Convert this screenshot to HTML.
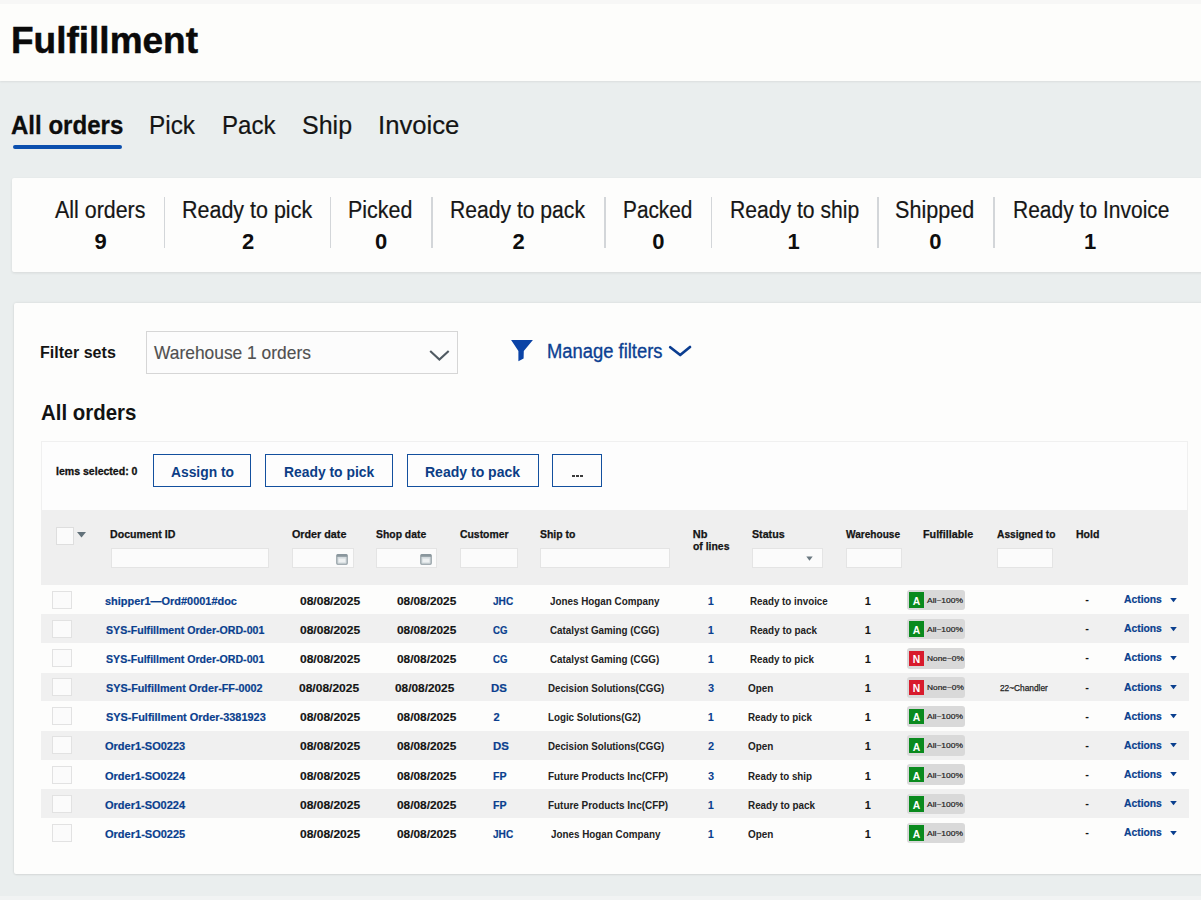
<!DOCTYPE html>
<html><head><meta charset="utf-8"><style>
html,body{margin:0;padding:0;}
body{width:1201px;height:900px;overflow:hidden;position:relative;background:#eaeeee;font-family:"Liberation Sans",sans-serif;}
.b{position:absolute;}
.t{position:absolute;white-space:nowrap;line-height:1;transform-origin:0 0;}
</style></head><body>
<div class="b" style="left:0px;top:0px;width:1201.00px;height:81.00px;background:#fdfdfb;box-shadow:0 1px 2px rgba(0,0,0,0.07);"></div>
<div class="b" style="left:0px;top:0px;width:1201.00px;height:4.00px;background:#f7f7f6;"></div>
<div class="b" style="left:0px;top:896px;width:1201.00px;height:4.00px;background:#f1f3f3;"></div>
<div class="b" style="left:12.5px;top:145px;width:109.70px;height:4.20px;background:#0b4fae;border-radius:2px;"></div>
<div class="b" style="left:11.7px;top:177.8px;width:1203.30px;height:94.60px;background:#fdfdfc;border-radius:2px;box-shadow:0 1px 3px rgba(0,0,0,0.09);"></div>
<div class="b" style="left:163.85px;top:196.5px;width:1.50px;height:51.50px;background:#d3d6d9;"></div>
<div class="b" style="left:329.65px;top:196.5px;width:1.50px;height:51.50px;background:#d3d6d9;"></div>
<div class="b" style="left:431.25px;top:196.5px;width:1.50px;height:51.50px;background:#d3d6d9;"></div>
<div class="b" style="left:604.25px;top:196.5px;width:1.50px;height:51.50px;background:#d3d6d9;"></div>
<div class="b" style="left:710.95px;top:196.5px;width:1.50px;height:51.50px;background:#d3d6d9;"></div>
<div class="b" style="left:877.25px;top:196.5px;width:1.50px;height:51.50px;background:#d3d6d9;"></div>
<div class="b" style="left:993.25px;top:196.5px;width:1.50px;height:51.50px;background:#d3d6d9;"></div>
<div class="b" style="left:13.5px;top:303.3px;width:1201.50px;height:571.00px;background:#fdfdfc;border-radius:2px;box-shadow:0 0 3px rgba(0,0,0,0.10), 0 1px 2px rgba(0,0,0,0.05);"></div>
<div class="b" style="left:145.7px;top:331.4px;width:312.30px;height:42.20px;background:#fcfcfc;border:1px solid #d6d6d6;box-sizing:border-box;"></div>
<div class="b" style="left:40.5px;top:441.2px;width:1147.80px;height:68.80px;background:#fdfdfd;border:1px solid #f0f0f0;border-bottom:none;box-sizing:border-box;"></div>
<div class="b" style="left:152.6px;top:454.4px;width:98.40px;height:32.60px;border:1.9px solid #13509e;box-sizing:border-box;background:#fdfdfd;"></div>
<div class="b" style="left:265px;top:454.4px;width:127.80px;height:32.60px;border:1.9px solid #13509e;box-sizing:border-box;background:#fdfdfd;"></div>
<div class="b" style="left:407px;top:454.4px;width:131.80px;height:32.60px;border:1.9px solid #13509e;box-sizing:border-box;background:#fdfdfd;"></div>
<div class="b" style="left:552px;top:454.4px;width:49.80px;height:32.60px;border:1.9px solid #13509e;box-sizing:border-box;background:#fdfdfd;"></div>
<div class="b" style="left:572.0px;top:475.0px;width:3.00px;height:2.20px;background:#3c3c3c;"></div>
<div class="b" style="left:575.9px;top:475.0px;width:3.00px;height:2.20px;background:#3c3c3c;"></div>
<div class="b" style="left:579.8px;top:475.0px;width:3.00px;height:2.20px;background:#3c3c3c;"></div>
<div class="b" style="left:40.7px;top:510px;width:1147.60px;height:75.10px;background:#efefef;"></div>
<div class="b" style="left:56.2px;top:526.9px;width:18.00px;height:18.50px;background:#fbfbfb;border:1.5px solid #dedede;box-sizing:border-box;"></div>
<div class="b" style="left:110.9px;top:548.2px;width:158.60px;height:19.80px;background:#fbfbfb;border:1px solid #e4e4e4;box-sizing:border-box;"></div>
<div class="b" style="left:292.3px;top:548.2px;width:61.40px;height:19.80px;background:#fbfbfb;border:1px solid #e4e4e4;box-sizing:border-box;"></div>
<div class="b" style="left:376.3px;top:548.2px;width:60.70px;height:19.80px;background:#fbfbfb;border:1px solid #e4e4e4;box-sizing:border-box;"></div>
<div class="b" style="left:460px;top:548.2px;width:57.50px;height:19.80px;background:#fbfbfb;border:1px solid #e4e4e4;box-sizing:border-box;"></div>
<div class="b" style="left:540px;top:548.2px;width:130.00px;height:19.80px;background:#fbfbfb;border:1px solid #e4e4e4;box-sizing:border-box;"></div>
<div class="b" style="left:751.7px;top:548.2px;width:71.60px;height:19.80px;background:#fbfbfb;border:1px solid #e4e4e4;box-sizing:border-box;"></div>
<div class="b" style="left:846px;top:548.2px;width:55.70px;height:19.80px;background:#fbfbfb;border:1px solid #e4e4e4;box-sizing:border-box;"></div>
<div class="b" style="left:996.5px;top:548.2px;width:56.90px;height:19.80px;background:#fbfbfb;border:1px solid #e4e4e4;box-sizing:border-box;"></div>
<div class="b" style="left:52.2px;top:590.8px;width:19.50px;height:18.00px;background:#fbfbfb;border:1.5px solid #e2e2e2;box-sizing:border-box;"></div>
<div class="b" style="left:906.7px;top:589.7px;width:58.60px;height:20.60px;background:#d9d9d9;border-radius:3px;"></div>
<div class="b" style="left:908.7px;top:592.3px;width:15.60px;height:15.40px;background:#0a8a1e;"></div>
<div class="b" style="left:40.7px;top:614.42px;width:1148.00px;height:28.62px;background:#f0f0f0;"></div>
<div class="b" style="left:52.2px;top:619.92px;width:19.50px;height:18.00px;background:#fbfbfb;border:1.5px solid #e2e2e2;box-sizing:border-box;"></div>
<div class="b" style="left:906.7px;top:618.82px;width:58.60px;height:20.60px;background:#d9d9d9;border-radius:3px;"></div>
<div class="b" style="left:908.7px;top:621.42px;width:15.60px;height:15.40px;background:#0a8a1e;"></div>
<div class="b" style="left:52.2px;top:649.04px;width:19.50px;height:18.00px;background:#fbfbfb;border:1.5px solid #e2e2e2;box-sizing:border-box;"></div>
<div class="b" style="left:906.7px;top:647.94px;width:58.60px;height:20.60px;background:#d9d9d9;border-radius:3px;"></div>
<div class="b" style="left:908.7px;top:650.54px;width:15.60px;height:15.40px;background:#d81b2c;"></div>
<div class="b" style="left:40.7px;top:672.66px;width:1148.00px;height:28.62px;background:#f0f0f0;"></div>
<div class="b" style="left:52.2px;top:678.16px;width:19.50px;height:18.00px;background:#fbfbfb;border:1.5px solid #e2e2e2;box-sizing:border-box;"></div>
<div class="b" style="left:906.7px;top:677.06px;width:58.60px;height:20.60px;background:#d9d9d9;border-radius:3px;"></div>
<div class="b" style="left:908.7px;top:679.66px;width:15.60px;height:15.40px;background:#d81b2c;"></div>
<div class="b" style="left:52.2px;top:707.28px;width:19.50px;height:18.00px;background:#fbfbfb;border:1.5px solid #e2e2e2;box-sizing:border-box;"></div>
<div class="b" style="left:906.7px;top:706.18px;width:58.60px;height:20.60px;background:#d9d9d9;border-radius:3px;"></div>
<div class="b" style="left:908.7px;top:708.78px;width:15.60px;height:15.40px;background:#0a8a1e;"></div>
<div class="b" style="left:40.7px;top:730.9px;width:1148.00px;height:28.62px;background:#f0f0f0;"></div>
<div class="b" style="left:52.2px;top:736.4px;width:19.50px;height:18.00px;background:#fbfbfb;border:1.5px solid #e2e2e2;box-sizing:border-box;"></div>
<div class="b" style="left:906.7px;top:735.3px;width:58.60px;height:20.60px;background:#d9d9d9;border-radius:3px;"></div>
<div class="b" style="left:908.7px;top:737.9px;width:15.60px;height:15.40px;background:#0a8a1e;"></div>
<div class="b" style="left:52.2px;top:765.52px;width:19.50px;height:18.00px;background:#fbfbfb;border:1.5px solid #e2e2e2;box-sizing:border-box;"></div>
<div class="b" style="left:906.7px;top:764.42px;width:58.60px;height:20.60px;background:#d9d9d9;border-radius:3px;"></div>
<div class="b" style="left:908.7px;top:767.02px;width:15.60px;height:15.40px;background:#0a8a1e;"></div>
<div class="b" style="left:40.7px;top:789.14px;width:1148.00px;height:28.62px;background:#f0f0f0;"></div>
<div class="b" style="left:52.2px;top:794.64px;width:19.50px;height:18.00px;background:#fbfbfb;border:1.5px solid #e2e2e2;box-sizing:border-box;"></div>
<div class="b" style="left:906.7px;top:793.54px;width:58.60px;height:20.60px;background:#d9d9d9;border-radius:3px;"></div>
<div class="b" style="left:908.7px;top:796.14px;width:15.60px;height:15.40px;background:#0a8a1e;"></div>
<div class="b" style="left:52.2px;top:823.76px;width:19.50px;height:18.00px;background:#fbfbfb;border:1.5px solid #e2e2e2;box-sizing:border-box;"></div>
<div class="b" style="left:906.7px;top:822.66px;width:58.60px;height:20.60px;background:#d9d9d9;border-radius:3px;"></div>
<div class="b" style="left:908.7px;top:825.26px;width:15.60px;height:15.40px;background:#0a8a1e;"></div>
<svg class="b" style="left:428px;top:346px" width="24" height="18" viewBox="0 0 24 18"><polyline points="2.2,4.9 11.4,13.6 20.7,4.9" fill="none" stroke="#505a62" stroke-width="2.1"/></svg>
<svg class="b" style="left:508px;top:337px" width="28" height="28" viewBox="0 0 28 28"><path d="M3.1,2.9 L24.9,2.9 L15.8,13.9 L15.6,21.4 L10.4,24.2 L10.4,13.9 Z" fill="#0b43a6"/></svg>
<svg class="b" style="left:667px;top:342px" width="27" height="18" viewBox="0 0 27 18"><polyline points="3.2,5.3 13.2,13.0 23.0,5.0" fill="none" stroke="#0b3d90" stroke-width="2.7" stroke-linecap="round" stroke-linejoin="round"/></svg>
<svg class="b" style="left:76px;top:531px" width="11" height="8" viewBox="0 0 11 8"><path d="M1,1 L10,1 L5.5,6.5 Z" fill="#62717a"/></svg>
<svg class="b" style="left:803.5px;top:554.5px" width="11" height="8" viewBox="0 0 11 8"><path d="M2.3,1.5 L8.7,1.5 L5.5,5.8 Z" fill="#6a7880"/></svg>
<svg class="b" style="left:336.3px;top:552.5px" width="12" height="12" viewBox="0 0 12 12"><rect x="0.8" y="1.6" width="10.4" height="9.6" rx="1" fill="#d5dcdf" stroke="#8a979d" stroke-width="1.1"/><rect x="0.8" y="1.6" width="10.4" height="2.2" fill="#8a979d"/><rect x="2.6" y="5.6" width="6.8" height="3.8" fill="#eef1f2"/></svg>
<svg class="b" style="left:419.7px;top:552.5px" width="12" height="12" viewBox="0 0 12 12"><rect x="0.8" y="1.6" width="10.4" height="9.6" rx="1" fill="#d5dcdf" stroke="#8a979d" stroke-width="1.1"/><rect x="0.8" y="1.6" width="10.4" height="2.2" fill="#8a979d"/><rect x="2.6" y="5.6" width="6.8" height="3.8" fill="#eef1f2"/></svg>
<svg class="b" style="left:1168.5px;top:596.60px" width="9" height="7" viewBox="0 0 9 7"><path d="M1.2,1 L7.8,1 L4.5,5.3 Z" fill="#0a3f8e"/></svg>
<svg class="b" style="left:1168.5px;top:625.72px" width="9" height="7" viewBox="0 0 9 7"><path d="M1.2,1 L7.8,1 L4.5,5.3 Z" fill="#0a3f8e"/></svg>
<svg class="b" style="left:1168.5px;top:654.84px" width="9" height="7" viewBox="0 0 9 7"><path d="M1.2,1 L7.8,1 L4.5,5.3 Z" fill="#0a3f8e"/></svg>
<svg class="b" style="left:1168.5px;top:683.96px" width="9" height="7" viewBox="0 0 9 7"><path d="M1.2,1 L7.8,1 L4.5,5.3 Z" fill="#0a3f8e"/></svg>
<svg class="b" style="left:1168.5px;top:713.08px" width="9" height="7" viewBox="0 0 9 7"><path d="M1.2,1 L7.8,1 L4.5,5.3 Z" fill="#0a3f8e"/></svg>
<svg class="b" style="left:1168.5px;top:742.20px" width="9" height="7" viewBox="0 0 9 7"><path d="M1.2,1 L7.8,1 L4.5,5.3 Z" fill="#0a3f8e"/></svg>
<svg class="b" style="left:1168.5px;top:771.32px" width="9" height="7" viewBox="0 0 9 7"><path d="M1.2,1 L7.8,1 L4.5,5.3 Z" fill="#0a3f8e"/></svg>
<svg class="b" style="left:1168.5px;top:800.44px" width="9" height="7" viewBox="0 0 9 7"><path d="M1.2,1 L7.8,1 L4.5,5.3 Z" fill="#0a3f8e"/></svg>
<svg class="b" style="left:1168.5px;top:829.56px" width="9" height="7" viewBox="0 0 9 7"><path d="M1.2,1 L7.8,1 L4.5,5.3 Z" fill="#0a3f8e"/></svg>
<div class="t" style="top:22.24px;font-size:37.4px;font-weight:bold;color:#0a0a0a;-webkit-text-stroke:0.5px #0a0a0a;left:10.53px;transform:scaleX(0.9895);">Fulfillment</div>
<div class="t" style="top:111.77px;font-size:26.5px;font-weight:bold;color:#0d0d0d;-webkit-text-stroke:0.3px #0d0d0d;left:10.82px;transform:scaleX(0.9076);">All orders</div>
<div class="t" style="top:111.77px;font-size:26.5px;font-weight:normal;color:#151515;-webkit-text-stroke:0.2px #151515;left:149.33px;transform:scaleX(0.9194);">Pick</div>
<div class="t" style="top:111.77px;font-size:26.5px;font-weight:normal;color:#151515;-webkit-text-stroke:0.2px #151515;left:221.76px;transform:scaleX(0.9075);">Pack</div>
<div class="t" style="top:111.77px;font-size:26.5px;font-weight:normal;color:#151515;-webkit-text-stroke:0.2px #151515;left:302.12px;transform:scaleX(0.9438);">Ship</div>
<div class="t" style="top:111.77px;font-size:26.5px;font-weight:normal;color:#151515;-webkit-text-stroke:0.2px #151515;left:377.58px;transform:scaleX(0.9695);">Invoice</div>
<div class="t" style="top:199.23px;font-size:23.0px;font-weight:normal;color:#161616;-webkit-text-stroke:0.2px #161616;left:55.20px;transform:scaleX(0.9309);">All orders</div>
<div class="t" style="top:230.78px;font-size:22.0px;font-weight:bold;color:#0e0e0e;left:94.47px;">9</div>
<div class="t" style="top:199.23px;font-size:23.0px;font-weight:normal;color:#161616;-webkit-text-stroke:0.2px #161616;left:181.67px;transform:scaleX(0.9338);">Ready to pick</div>
<div class="t" style="top:230.78px;font-size:22.0px;font-weight:bold;color:#0e0e0e;left:241.97px;">2</div>
<div class="t" style="top:199.23px;font-size:23.0px;font-weight:normal;color:#161616;-webkit-text-stroke:0.2px #161616;left:348.07px;transform:scaleX(0.9323);">Picked</div>
<div class="t" style="top:230.78px;font-size:22.0px;font-weight:bold;color:#0e0e0e;left:374.95px;">0</div>
<div class="t" style="top:199.23px;font-size:23.0px;font-weight:normal;color:#161616;-webkit-text-stroke:0.2px #161616;left:449.89px;transform:scaleX(0.9177);">Ready to pack</div>
<div class="t" style="top:230.78px;font-size:22.0px;font-weight:bold;color:#0e0e0e;left:512.62px;">2</div>
<div class="t" style="top:199.23px;font-size:23.0px;font-weight:normal;color:#161616;-webkit-text-stroke:0.2px #161616;left:622.72px;transform:scaleX(0.9048);">Packed</div>
<div class="t" style="top:230.78px;font-size:22.0px;font-weight:bold;color:#0e0e0e;left:652.15px;">0</div>
<div class="t" style="top:199.23px;font-size:23.0px;font-weight:normal;color:#161616;-webkit-text-stroke:0.2px #161616;left:729.59px;transform:scaleX(0.9188);">Ready to ship</div>
<div class="t" style="top:230.78px;font-size:22.0px;font-weight:bold;color:#0e0e0e;left:787.40px;">1</div>
<div class="t" style="top:199.23px;font-size:23.0px;font-weight:normal;color:#161616;-webkit-text-stroke:0.2px #161616;left:895.36px;transform:scaleX(0.9378);">Shipped</div>
<div class="t" style="top:230.78px;font-size:22.0px;font-weight:bold;color:#0e0e0e;left:929.35px;">0</div>
<div class="t" style="top:199.23px;font-size:23.0px;font-weight:normal;color:#161616;-webkit-text-stroke:0.2px #161616;left:1012.70px;transform:scaleX(0.9134);">Ready to Invoice</div>
<div class="t" style="top:230.78px;font-size:22.0px;font-weight:bold;color:#0e0e0e;left:1084.05px;">1</div>
<div class="t" style="top:343.64px;font-size:17.2px;font-weight:bold;color:#141414;left:39.83px;transform:scaleX(0.9338);">Filter sets</div>
<div class="t" style="top:343.12px;font-size:19.0px;font-weight:normal;color:#505050;-webkit-text-stroke:0.15px #505050;left:153.77px;transform:scaleX(0.9150);">Warehouse 1 orders</div>
<div class="t" style="top:340.67px;font-size:20.0px;font-weight:normal;color:#0c3f92;-webkit-text-stroke:0.35px #0c3f92;left:546.62px;transform:scaleX(0.9190);">Manage filters</div>
<div class="t" style="top:401.75px;font-size:22.5px;font-weight:bold;color:#121212;left:40.55px;transform:scaleX(0.9082);">All orders</div>
<div class="t" style="top:466.09px;font-size:11px;font-weight:bold;color:#111;-webkit-text-stroke:0.3px #111;left:55.68px;transform:scaleX(0.9588);">Iems selected: 0</div>
<div class="t" style="top:464.73px;font-size:14.5px;font-weight:bold;color:#0c3d86;left:170.52px;transform:scaleX(0.9538);">Assign to</div>
<div class="t" style="top:464.73px;font-size:14.5px;font-weight:bold;color:#0c3d86;left:283.84px;transform:scaleX(0.9566);">Ready to pick</div>
<div class="t" style="top:464.73px;font-size:14.5px;font-weight:bold;color:#0c3d86;left:425.03px;transform:scaleX(0.9666);">Ready to pack</div>
<div class="t" style="top:529.29px;font-size:11.0px;font-weight:bold;color:#141414;-webkit-text-stroke:0.25px #141414;left:110.48px;transform:scaleX(0.9639);">Document ID</div>
<div class="t" style="top:529.29px;font-size:11.0px;font-weight:bold;color:#141414;-webkit-text-stroke:0.25px #141414;left:292.41px;transform:scaleX(0.9772);">Order date</div>
<div class="t" style="top:529.29px;font-size:11.0px;font-weight:bold;color:#141414;-webkit-text-stroke:0.25px #141414;left:376.46px;transform:scaleX(0.9448);">Shop date</div>
<div class="t" style="top:529.29px;font-size:11.0px;font-weight:bold;color:#141414;-webkit-text-stroke:0.25px #141414;left:459.83px;transform:scaleX(0.9458);">Customer</div>
<div class="t" style="top:529.29px;font-size:11.0px;font-weight:bold;color:#141414;-webkit-text-stroke:0.25px #141414;left:540.06px;transform:scaleX(0.9507);">Ship to</div>
<div class="t" style="top:529.29px;font-size:11.0px;font-weight:bold;color:#141414;-webkit-text-stroke:0.25px #141414;left:692.75px;">Nb</div>
<div class="t" style="top:529.29px;font-size:11.0px;font-weight:bold;color:#141414;-webkit-text-stroke:0.25px #141414;left:751.76px;transform:scaleX(0.9697);">Status</div>
<div class="t" style="top:529.29px;font-size:11.0px;font-weight:bold;color:#141414;-webkit-text-stroke:0.25px #141414;left:846.30px;transform:scaleX(0.9179);">Warehouse</div>
<div class="t" style="top:529.29px;font-size:11.0px;font-weight:bold;color:#141414;-webkit-text-stroke:0.25px #141414;left:923.37px;transform:scaleX(0.9771);">Fulfillable</div>
<div class="t" style="top:529.29px;font-size:11.0px;font-weight:bold;color:#141414;-webkit-text-stroke:0.25px #141414;left:996.57px;transform:scaleX(0.9285);">Assigned to</div>
<div class="t" style="top:529.29px;font-size:11.0px;font-weight:bold;color:#141414;-webkit-text-stroke:0.25px #141414;left:1076.28px;transform:scaleX(0.9565);">Hold</div>
<div class="t" style="top:540.99px;font-size:11.0px;font-weight:bold;color:#141414;-webkit-text-stroke:0.25px #141414;left:693.03px;transform:scaleX(0.9467);">of lines</div>
<div class="t" style="top:595.79px;font-size:11.0px;font-weight:bold;color:#0a3f8e;-webkit-text-stroke:0.2px #0a3f8e;left:105.30px;transform:scaleX(0.9943);">shipper1—Ord#0001#doc</div>
<div class="t" style="top:595.79px;font-size:11.0px;font-weight:bold;color:#141414;-webkit-text-stroke:0.15px #141414;left:300.35px;transform:scaleX(1.0931);">08/08/2025</div>
<div class="t" style="top:595.79px;font-size:11.0px;font-weight:bold;color:#141414;-webkit-text-stroke:0.15px #141414;left:396.86px;transform:scaleX(1.0765);">08/08/2025</div>
<div class="t" style="top:595.79px;font-size:11.0px;font-weight:bold;color:#0a3f8e;-webkit-text-stroke:0.2px #0a3f8e;left:493.47px;transform:scaleX(0.9163);">JHC</div>
<div class="t" style="top:595.79px;font-size:11.0px;font-weight:bold;color:#222;left:550.28px;transform:scaleX(0.8951);">Jones Hogan Company</div>
<div class="t" style="top:595.79px;font-size:11.0px;font-weight:bold;color:#0a3f8e;left:707.75px;">1</div>
<div class="t" style="top:595.79px;font-size:11.0px;font-weight:bold;color:#222;left:750.13px;transform:scaleX(0.8893);">Ready to invoice</div>
<div class="t" style="top:595.79px;font-size:11.0px;font-weight:bold;color:#141414;left:864.75px;">1</div>
<div class="t" style="top:594.19px;font-size:11.0px;font-weight:bold;color:#141414;left:1085.33px;">-</div>
<div class="t" style="top:594.19px;font-size:11.0px;font-weight:bold;color:#0a3f8e;-webkit-text-stroke:0.2px #0a3f8e;left:1123.77px;transform:scaleX(0.9384);">Actions</div>
<div class="t" style="top:596.83px;font-size:8.0px;font-weight:normal;color:#222;-webkit-text-stroke:0.2px #222;left:927.30px;transform:scaleX(1.0578);">All~100%</div>
<div class="t" style="top:596.98px;font-size:10.3px;font-weight:bold;color:#fff;left:912.75px;">A</div>
<div class="t" style="top:624.91px;font-size:11.0px;font-weight:bold;color:#0a3f8e;-webkit-text-stroke:0.2px #0a3f8e;left:105.56px;transform:scaleX(0.9628);">SYS-Fulfillment Order-ORD-001</div>
<div class="t" style="top:624.91px;font-size:11.0px;font-weight:bold;color:#141414;-webkit-text-stroke:0.15px #141414;left:300.35px;transform:scaleX(1.0931);">08/08/2025</div>
<div class="t" style="top:624.91px;font-size:11.0px;font-weight:bold;color:#141414;-webkit-text-stroke:0.15px #141414;left:396.86px;transform:scaleX(1.0765);">08/08/2025</div>
<div class="t" style="top:624.91px;font-size:11.0px;font-weight:bold;color:#0a3f8e;-webkit-text-stroke:0.2px #0a3f8e;left:493.26px;transform:scaleX(0.8721);">CG</div>
<div class="t" style="top:624.91px;font-size:11.0px;font-weight:bold;color:#222;left:550.05px;transform:scaleX(0.8932);">Catalyst Gaming (CGG)</div>
<div class="t" style="top:624.91px;font-size:11.0px;font-weight:bold;color:#0a3f8e;left:707.75px;">1</div>
<div class="t" style="top:624.91px;font-size:11.0px;font-weight:bold;color:#222;left:750.13px;transform:scaleX(0.8976);">Ready to pack</div>
<div class="t" style="top:624.91px;font-size:11.0px;font-weight:bold;color:#141414;left:864.75px;">1</div>
<div class="t" style="top:623.31px;font-size:11.0px;font-weight:bold;color:#141414;left:1085.33px;">-</div>
<div class="t" style="top:623.31px;font-size:11.0px;font-weight:bold;color:#0a3f8e;-webkit-text-stroke:0.2px #0a3f8e;left:1123.77px;transform:scaleX(0.9384);">Actions</div>
<div class="t" style="top:625.95px;font-size:8.0px;font-weight:normal;color:#222;-webkit-text-stroke:0.2px #222;left:927.30px;transform:scaleX(1.0578);">All~100%</div>
<div class="t" style="top:626.10px;font-size:10.3px;font-weight:bold;color:#fff;left:912.75px;">A</div>
<div class="t" style="top:654.03px;font-size:11.0px;font-weight:bold;color:#0a3f8e;-webkit-text-stroke:0.2px #0a3f8e;left:105.56px;transform:scaleX(0.9628);">SYS-Fulfillment Order-ORD-001</div>
<div class="t" style="top:654.03px;font-size:11.0px;font-weight:bold;color:#141414;-webkit-text-stroke:0.15px #141414;left:300.35px;transform:scaleX(1.0931);">08/08/2025</div>
<div class="t" style="top:654.03px;font-size:11.0px;font-weight:bold;color:#141414;-webkit-text-stroke:0.15px #141414;left:396.86px;transform:scaleX(1.0765);">08/08/2025</div>
<div class="t" style="top:654.03px;font-size:11.0px;font-weight:bold;color:#0a3f8e;-webkit-text-stroke:0.2px #0a3f8e;left:493.26px;transform:scaleX(0.8721);">CG</div>
<div class="t" style="top:654.03px;font-size:11.0px;font-weight:bold;color:#222;left:550.05px;transform:scaleX(0.8932);">Catalyst Gaming (CGG)</div>
<div class="t" style="top:654.03px;font-size:11.0px;font-weight:bold;color:#0a3f8e;left:707.75px;">1</div>
<div class="t" style="top:654.03px;font-size:11.0px;font-weight:bold;color:#222;left:750.13px;transform:scaleX(0.8933);">Ready to pick</div>
<div class="t" style="top:654.03px;font-size:11.0px;font-weight:bold;color:#141414;left:864.75px;">1</div>
<div class="t" style="top:652.43px;font-size:11.0px;font-weight:bold;color:#141414;left:1085.33px;">-</div>
<div class="t" style="top:652.43px;font-size:11.0px;font-weight:bold;color:#0a3f8e;-webkit-text-stroke:0.2px #0a3f8e;left:1123.77px;transform:scaleX(0.9384);">Actions</div>
<div class="t" style="top:655.07px;font-size:8.0px;font-weight:normal;color:#222;-webkit-text-stroke:0.2px #222;left:926.52px;transform:scaleX(1.0423);">None~0%</div>
<div class="t" style="top:655.22px;font-size:10.3px;font-weight:bold;color:#fff;left:912.75px;">N</div>
<div class="t" style="top:683.15px;font-size:11.0px;font-weight:bold;color:#0a3f8e;-webkit-text-stroke:0.2px #0a3f8e;left:105.55px;transform:scaleX(0.9811);">SYS-Fulfillment Order-FF-0002</div>
<div class="t" style="top:683.15px;font-size:11.0px;font-weight:bold;color:#141414;-webkit-text-stroke:0.15px #141414;left:298.85px;transform:scaleX(1.0931);">08/08/2025</div>
<div class="t" style="top:683.15px;font-size:11.0px;font-weight:bold;color:#141414;-webkit-text-stroke:0.15px #141414;left:395.36px;transform:scaleX(1.0765);">08/08/2025</div>
<div class="t" style="top:683.15px;font-size:11.0px;font-weight:bold;color:#0a3f8e;-webkit-text-stroke:0.2px #0a3f8e;left:490.72px;transform:scaleX(1.0357);">DS</div>
<div class="t" style="top:683.15px;font-size:11.0px;font-weight:bold;color:#222;left:547.64px;transform:scaleX(0.8845);">Decision Solutions(CGG)</div>
<div class="t" style="top:683.15px;font-size:11.0px;font-weight:bold;color:#0a3f8e;left:708.00px;">3</div>
<div class="t" style="top:683.15px;font-size:11.0px;font-weight:bold;color:#222;left:748.35px;transform:scaleX(0.9037);">Open</div>
<div class="t" style="top:683.15px;font-size:11.0px;font-weight:bold;color:#141414;left:864.75px;">1</div>
<div class="t" style="top:681.55px;font-size:11.0px;font-weight:bold;color:#141414;left:1085.33px;">-</div>
<div class="t" style="top:681.55px;font-size:11.0px;font-weight:bold;color:#0a3f8e;-webkit-text-stroke:0.2px #0a3f8e;left:1123.77px;transform:scaleX(0.9384);">Actions</div>
<div class="t" style="top:684.26px;font-size:8.5px;font-weight:normal;color:#222;-webkit-text-stroke:0.25px #222;left:1000.31px;transform:scaleX(0.9782);">22~Chandler</div>
<div class="t" style="top:684.19px;font-size:8.0px;font-weight:normal;color:#222;-webkit-text-stroke:0.2px #222;left:926.52px;transform:scaleX(1.0423);">None~0%</div>
<div class="t" style="top:684.34px;font-size:10.3px;font-weight:bold;color:#fff;left:912.75px;">N</div>
<div class="t" style="top:712.27px;font-size:11.0px;font-weight:bold;color:#0a3f8e;-webkit-text-stroke:0.2px #0a3f8e;left:105.55px;transform:scaleX(0.9934);">SYS-Fulfillment Order-3381923</div>
<div class="t" style="top:712.27px;font-size:11.0px;font-weight:bold;color:#141414;-webkit-text-stroke:0.15px #141414;left:300.35px;transform:scaleX(1.0931);">08/08/2025</div>
<div class="t" style="top:712.27px;font-size:11.0px;font-weight:bold;color:#141414;-webkit-text-stroke:0.15px #141414;left:396.86px;transform:scaleX(1.0765);">08/08/2025</div>
<div class="t" style="top:712.27px;font-size:11.0px;font-weight:bold;color:#0a3f8e;-webkit-text-stroke:0.2px #0a3f8e;left:493.45px;transform:scaleX(1.0000);">2</div>
<div class="t" style="top:712.27px;font-size:11.0px;font-weight:bold;color:#222;left:547.63px;transform:scaleX(0.8881);">Logic Solutions(G2)</div>
<div class="t" style="top:712.27px;font-size:11.0px;font-weight:bold;color:#0a3f8e;left:707.75px;">1</div>
<div class="t" style="top:712.27px;font-size:11.0px;font-weight:bold;color:#222;left:748.13px;transform:scaleX(0.8933);">Ready to pick</div>
<div class="t" style="top:712.27px;font-size:11.0px;font-weight:bold;color:#141414;left:864.75px;">1</div>
<div class="t" style="top:710.67px;font-size:11.0px;font-weight:bold;color:#141414;left:1085.33px;">-</div>
<div class="t" style="top:710.67px;font-size:11.0px;font-weight:bold;color:#0a3f8e;-webkit-text-stroke:0.2px #0a3f8e;left:1123.77px;transform:scaleX(0.9384);">Actions</div>
<div class="t" style="top:713.31px;font-size:8.0px;font-weight:normal;color:#222;-webkit-text-stroke:0.2px #222;left:927.30px;transform:scaleX(1.0578);">All~100%</div>
<div class="t" style="top:713.46px;font-size:10.3px;font-weight:bold;color:#fff;left:912.75px;">A</div>
<div class="t" style="top:741.39px;font-size:11.0px;font-weight:bold;color:#0a3f8e;-webkit-text-stroke:0.2px #0a3f8e;left:105.30px;transform:scaleX(1.0019);">Order1-SO0223</div>
<div class="t" style="top:741.39px;font-size:11.0px;font-weight:bold;color:#141414;-webkit-text-stroke:0.15px #141414;left:300.35px;transform:scaleX(1.0931);">08/08/2025</div>
<div class="t" style="top:741.39px;font-size:11.0px;font-weight:bold;color:#141414;-webkit-text-stroke:0.15px #141414;left:396.86px;transform:scaleX(1.0765);">08/08/2025</div>
<div class="t" style="top:741.39px;font-size:11.0px;font-weight:bold;color:#0a3f8e;-webkit-text-stroke:0.2px #0a3f8e;left:492.92px;transform:scaleX(1.0357);">DS</div>
<div class="t" style="top:741.39px;font-size:11.0px;font-weight:bold;color:#222;left:547.64px;transform:scaleX(0.8845);">Decision Solutions(CGG)</div>
<div class="t" style="top:741.39px;font-size:11.0px;font-weight:bold;color:#0a3f8e;left:708.00px;">2</div>
<div class="t" style="top:741.39px;font-size:11.0px;font-weight:bold;color:#222;left:748.35px;transform:scaleX(0.9037);">Open</div>
<div class="t" style="top:741.39px;font-size:11.0px;font-weight:bold;color:#141414;left:864.75px;">1</div>
<div class="t" style="top:739.79px;font-size:11.0px;font-weight:bold;color:#141414;left:1085.33px;">-</div>
<div class="t" style="top:739.79px;font-size:11.0px;font-weight:bold;color:#0a3f8e;-webkit-text-stroke:0.2px #0a3f8e;left:1123.77px;transform:scaleX(0.9384);">Actions</div>
<div class="t" style="top:742.43px;font-size:8.0px;font-weight:normal;color:#222;-webkit-text-stroke:0.2px #222;left:927.30px;transform:scaleX(1.0578);">All~100%</div>
<div class="t" style="top:742.58px;font-size:10.3px;font-weight:bold;color:#fff;left:912.75px;">A</div>
<div class="t" style="top:770.51px;font-size:11.0px;font-weight:bold;color:#0a3f8e;-webkit-text-stroke:0.2px #0a3f8e;left:105.30px;transform:scaleX(0.9987);">Order1-SO0224</div>
<div class="t" style="top:770.51px;font-size:11.0px;font-weight:bold;color:#141414;-webkit-text-stroke:0.15px #141414;left:300.35px;transform:scaleX(1.0931);">08/08/2025</div>
<div class="t" style="top:770.51px;font-size:11.0px;font-weight:bold;color:#141414;-webkit-text-stroke:0.15px #141414;left:396.86px;transform:scaleX(1.0765);">08/08/2025</div>
<div class="t" style="top:770.51px;font-size:11.0px;font-weight:bold;color:#0a3f8e;-webkit-text-stroke:0.2px #0a3f8e;left:492.98px;transform:scaleX(0.9615);">FP</div>
<div class="t" style="top:770.51px;font-size:11.0px;font-weight:bold;color:#222;left:547.62px;transform:scaleX(0.9015);">Future Products Inc(CFP)</div>
<div class="t" style="top:770.51px;font-size:11.0px;font-weight:bold;color:#0a3f8e;left:708.00px;">3</div>
<div class="t" style="top:770.51px;font-size:11.0px;font-weight:bold;color:#222;left:748.13px;transform:scaleX(0.8873);">Ready to ship</div>
<div class="t" style="top:770.51px;font-size:11.0px;font-weight:bold;color:#141414;left:864.75px;">1</div>
<div class="t" style="top:768.91px;font-size:11.0px;font-weight:bold;color:#141414;left:1085.33px;">-</div>
<div class="t" style="top:768.91px;font-size:11.0px;font-weight:bold;color:#0a3f8e;-webkit-text-stroke:0.2px #0a3f8e;left:1123.77px;transform:scaleX(0.9384);">Actions</div>
<div class="t" style="top:771.55px;font-size:8.0px;font-weight:normal;color:#222;-webkit-text-stroke:0.2px #222;left:927.30px;transform:scaleX(1.0578);">All~100%</div>
<div class="t" style="top:771.70px;font-size:10.3px;font-weight:bold;color:#fff;left:912.75px;">A</div>
<div class="t" style="top:799.63px;font-size:11.0px;font-weight:bold;color:#0a3f8e;-webkit-text-stroke:0.2px #0a3f8e;left:105.30px;transform:scaleX(0.9987);">Order1-SO0224</div>
<div class="t" style="top:799.63px;font-size:11.0px;font-weight:bold;color:#141414;-webkit-text-stroke:0.15px #141414;left:300.35px;transform:scaleX(1.0931);">08/08/2025</div>
<div class="t" style="top:799.63px;font-size:11.0px;font-weight:bold;color:#141414;-webkit-text-stroke:0.15px #141414;left:396.86px;transform:scaleX(1.0765);">08/08/2025</div>
<div class="t" style="top:799.63px;font-size:11.0px;font-weight:bold;color:#0a3f8e;-webkit-text-stroke:0.2px #0a3f8e;left:492.98px;transform:scaleX(0.9615);">FP</div>
<div class="t" style="top:799.63px;font-size:11.0px;font-weight:bold;color:#222;left:547.62px;transform:scaleX(0.9015);">Future Products Inc(CFP)</div>
<div class="t" style="top:799.63px;font-size:11.0px;font-weight:bold;color:#0a3f8e;left:707.75px;">1</div>
<div class="t" style="top:799.63px;font-size:11.0px;font-weight:bold;color:#222;left:748.13px;transform:scaleX(0.8976);">Ready to pack</div>
<div class="t" style="top:799.63px;font-size:11.0px;font-weight:bold;color:#141414;left:864.75px;">1</div>
<div class="t" style="top:798.03px;font-size:11.0px;font-weight:bold;color:#141414;left:1085.33px;">-</div>
<div class="t" style="top:798.03px;font-size:11.0px;font-weight:bold;color:#0a3f8e;-webkit-text-stroke:0.2px #0a3f8e;left:1123.77px;transform:scaleX(0.9384);">Actions</div>
<div class="t" style="top:800.67px;font-size:8.0px;font-weight:normal;color:#222;-webkit-text-stroke:0.2px #222;left:927.30px;transform:scaleX(1.0578);">All~100%</div>
<div class="t" style="top:800.82px;font-size:10.3px;font-weight:bold;color:#fff;left:912.75px;">A</div>
<div class="t" style="top:828.75px;font-size:11.0px;font-weight:bold;color:#0a3f8e;-webkit-text-stroke:0.2px #0a3f8e;left:105.30px;transform:scaleX(1.0019);">Order1-SO0225</div>
<div class="t" style="top:828.75px;font-size:11.0px;font-weight:bold;color:#141414;-webkit-text-stroke:0.15px #141414;left:300.35px;transform:scaleX(1.0931);">08/08/2025</div>
<div class="t" style="top:828.75px;font-size:11.0px;font-weight:bold;color:#141414;-webkit-text-stroke:0.15px #141414;left:396.86px;transform:scaleX(1.0765);">08/08/2025</div>
<div class="t" style="top:828.75px;font-size:11.0px;font-weight:bold;color:#0a3f8e;-webkit-text-stroke:0.2px #0a3f8e;left:493.47px;transform:scaleX(0.9163);">JHC</div>
<div class="t" style="top:828.75px;font-size:11.0px;font-weight:bold;color:#222;left:551.28px;transform:scaleX(0.8951);">Jones Hogan Company</div>
<div class="t" style="top:828.75px;font-size:11.0px;font-weight:bold;color:#0a3f8e;left:707.75px;">1</div>
<div class="t" style="top:828.75px;font-size:11.0px;font-weight:bold;color:#222;left:748.35px;transform:scaleX(0.9037);">Open</div>
<div class="t" style="top:828.75px;font-size:11.0px;font-weight:bold;color:#141414;left:864.75px;">1</div>
<div class="t" style="top:827.15px;font-size:11.0px;font-weight:bold;color:#141414;left:1085.33px;">-</div>
<div class="t" style="top:827.15px;font-size:11.0px;font-weight:bold;color:#0a3f8e;-webkit-text-stroke:0.2px #0a3f8e;left:1123.77px;transform:scaleX(0.9384);">Actions</div>
<div class="t" style="top:829.79px;font-size:8.0px;font-weight:normal;color:#222;-webkit-text-stroke:0.2px #222;left:927.30px;transform:scaleX(1.0578);">All~100%</div>
<div class="t" style="top:829.94px;font-size:10.3px;font-weight:bold;color:#fff;left:912.75px;">A</div>
</body></html>
